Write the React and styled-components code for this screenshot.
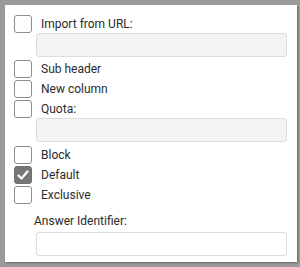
import React from 'react';
import styled, { createGlobalStyle } from 'styled-components';

const GlobalStyle = createGlobalStyle`
  html, body {
    margin: 0;
    padding: 0;
    background: #9b9b9b;
  }
  body {
    font-family: Roboto, "Liberation Sans", sans-serif;
  }
`;

const Page = styled.div`
  width: 300px;
  height: 267px;
  padding: 5px 3px 5px 5px;
  box-sizing: border-box;
`;

const Panel = styled.div`
  width: 292px;
  height: 257px;
  box-sizing: border-box;
  background: #fff;
  box-shadow: 1px 1px 2px rgba(0, 0, 0, 0.35);
  padding: 10px 10px 0 9px;
  display: flex;
  flex-direction: column;
`;

const Row = styled.label`
  display: flex;
  align-items: center;
  height: 18px;
  margin-bottom: ${(p) => p.$gap ?? 2}px;
  font-size: 12px;
  color: #2b2b2b;
`;

const Box = styled.span`
  width: 18px;
  height: 18px;
  box-sizing: border-box;
  border-radius: 3px;
  border: 1px solid ${(p) => (p.$checked ? '#707070' : '#8c8c8c')};
  background: ${(p) => (p.$checked ? '#777' : '#fff')};
  display: flex;
  align-items: center;
  justify-content: center;
  flex-shrink: 0;
`;

const Text = styled.span`
  margin-left: 9px;
`;

const Field = styled.div`
  margin-left: 22px;
  width: 251px;
  height: 24px;
  box-sizing: border-box;
  border: 1px solid #dcdcdc;
  border-radius: 3px;
  background: ${(p) => (p.$disabled ? '#f3f3f3' : '#fff')};
  margin-bottom: ${(p) => p.$gap ?? 3}px;
`;

const FieldLabel = styled.div`
  margin: 10px 0 4px 20px;
  font-size: 12px;
  color: #2b2b2b;
  line-height: 14px;
`;

const Check = () => (
  <svg width="14" height="14" viewBox="0 0 14 14">
    <path d="M2.5 7.5 L5.5 10.5 L11.5 3.5" fill="none" stroke="#fff" strokeWidth="2.2" strokeLinecap="round" strokeLinejoin="round" />
  </svg>
);

const Option = ({ label, checked, gap }) => (
  <Row $gap={gap}>
    <Box $checked={checked}>{checked && <Check />}</Box>
    <Text>{label}</Text>
  </Row>
);

export default function App() {
  return (
    <>
      <GlobalStyle />
      <Page>
        <Panel>
          <Option label="Import from URL:" gap={0} />
          <Field $disabled />
          <Option label="Sub header" />
          <Option label="New column" />
          <Option label="Quota:" gap={0} />
          <Field $disabled $gap={4} />
          <Option label="Block" />
          <Option label="Default" checked />
          <Option label="Exclusive" gap={0} />
          <FieldLabel>Answer Identifier:</FieldLabel>
          <Field />
        </Panel>
      </Page>
    </>
  );
}
